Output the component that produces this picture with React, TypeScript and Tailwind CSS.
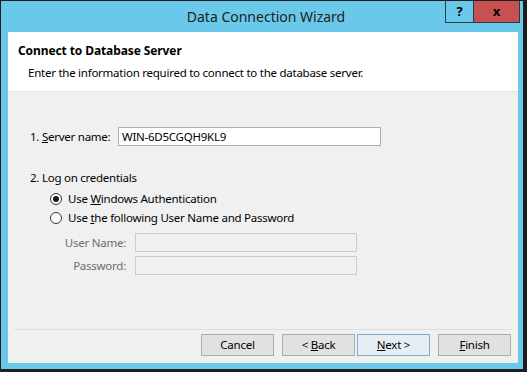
export default function App() {
  const font = { fontFamily: '"Segoe UI", "Noto Sans", "Open Sans", sans-serif' };

  const buttons = [
    { pre: '', key: '', post: 'Cancel', ml: 'ml-0', active: false },
    { pre: '< ', key: 'B', post: 'ack', ml: 'ml-[8px]', active: false },
    { pre: '', key: 'N', post: 'ext >', ml: 'ml-[2px]', active: true },
    { pre: '', key: 'F', post: 'inish', ml: 'ml-[8px]', active: false },
  ];

  return (
    <div className="w-[527px] h-[372px] bg-[#1e1e1e] text-black" style={font}>
      <div className="w-[527px] h-[372px] border-t border-l border-r-4 border-b-[3px] border-[#1e1e1e] bg-[#6ac8ea] flex flex-col">
        {/* Title bar */}
        <div className="relative h-[31px] shrink-0 flex items-center justify-center">
          <span className="text-[14px] text-[#1e1e1e] pl-[8px] pb-[1px]">Data Connection Wizard</span>
          <div className="absolute right-[3px] top-0 flex h-[22px]">
            <div className="w-[29px] h-[22px] border border-t-0 border-[#2a3a44] flex items-center justify-center text-[13px] font-bold leading-none">
              ?
            </div>
            <div className="w-[46px] h-[22px] bg-[#c75050] border border-l-0 border-t-0 border-[#2a3a44] flex items-center justify-center text-[13px] font-bold leading-none">
              x
            </div>
          </div>
        </div>

        {/* Client area */}
        <div className="flex-1 ml-[7px] mr-[5px] mb-[6px] bg-[#f0f0f0] flex flex-col text-[11.5px] tracking-[-0.25px]">
          {/* Header */}
          <div className="h-[60px] shrink-0 bg-white border-b border-[#dfe3e6] pl-[10px]">
            <div className="pt-[10px] text-[12px] tracking-[-0.1px] font-bold leading-[18px]">Connect to Database Server</div>
            <div className="pl-[10px] mt-[5px] leading-[16px]">
              Enter the information required to connect to the database server.
            </div>
          </div>

          {/* Body */}
          <div className="flex-1 pl-[22px]">
            <div className="mt-[35px] flex items-center h-[19px]">
              <span className="w-[88px]">
                1. <span className="underline">S</span>erver name:
              </span>
              <div className="w-[263px] h-[19px] bg-white border border-[#abadb3] pl-[3px] flex items-center">
                WIN-6D5CGQH9KL9
              </div>
            </div>

            <div className="mt-[24px] leading-[16px]">2. Log on credentials</div>

            <div className="mt-[3px] pl-[20px]">
              <div className="h-[19px] flex items-center">
                <span className="w-[12px] h-[12px] rounded-full border border-[#333] bg-white flex items-center justify-center">
                  <span className="w-[6px] h-[6px] rounded-full bg-[#1a1a1a]" />
                </span>
                <span className="ml-[6px]">
                  Use <span className="underline">W</span>indows Authentication
                </span>
              </div>
              <div className="h-[19px] flex items-center">
                <span className="w-[12px] h-[12px] rounded-full border border-[#333] bg-white" />
                <span className="ml-[6px]">
                  Use <span className="underline">t</span>he following User Name and Password
                </span>
              </div>
            </div>

            <div className="mt-[6px] flex items-center h-[19px] text-[#6d6d6d]">
              <span className="w-[105px] text-right pr-[9px]">User Name:</span>
              <div className="w-[222px] h-[19px] border border-[#cccccc] bg-[#f0f0f0]" />
            </div>
            <div className="mt-[4px] flex items-center h-[19px] text-[#6d6d6d]">
              <span className="w-[105px] text-right pr-[9px]">Password:</span>
              <div className="w-[222px] h-[19px] border border-[#cccccc] bg-[#f0f0f0]" />
            </div>
          </div>

          {/* Footer */}
          <div className="shrink-0 mx-[6px] border-t border-[#d8e0e6]" />
          <div className="shrink-0 flex justify-end pr-[7px] pt-[4px] pb-[7px]">
            {buttons.map((b) => (
              <div
                key={b.post}
                className={`${b.ml} w-[73px] h-[22px] flex items-center justify-center border ${
                  b.active ? 'border-[#7eaad4] bg-[#e6edf4]' : 'border-[#adadad] bg-[#e1e1e1]'
                }`}
              >
                <span className="whitespace-pre">
                  {b.pre}
                  {b.key && <span className="underline">{b.key}</span>}
                  {b.post}
                </span>
              </div>
            ))}
          </div>
        </div>
      </div>
    </div>
  );
}
